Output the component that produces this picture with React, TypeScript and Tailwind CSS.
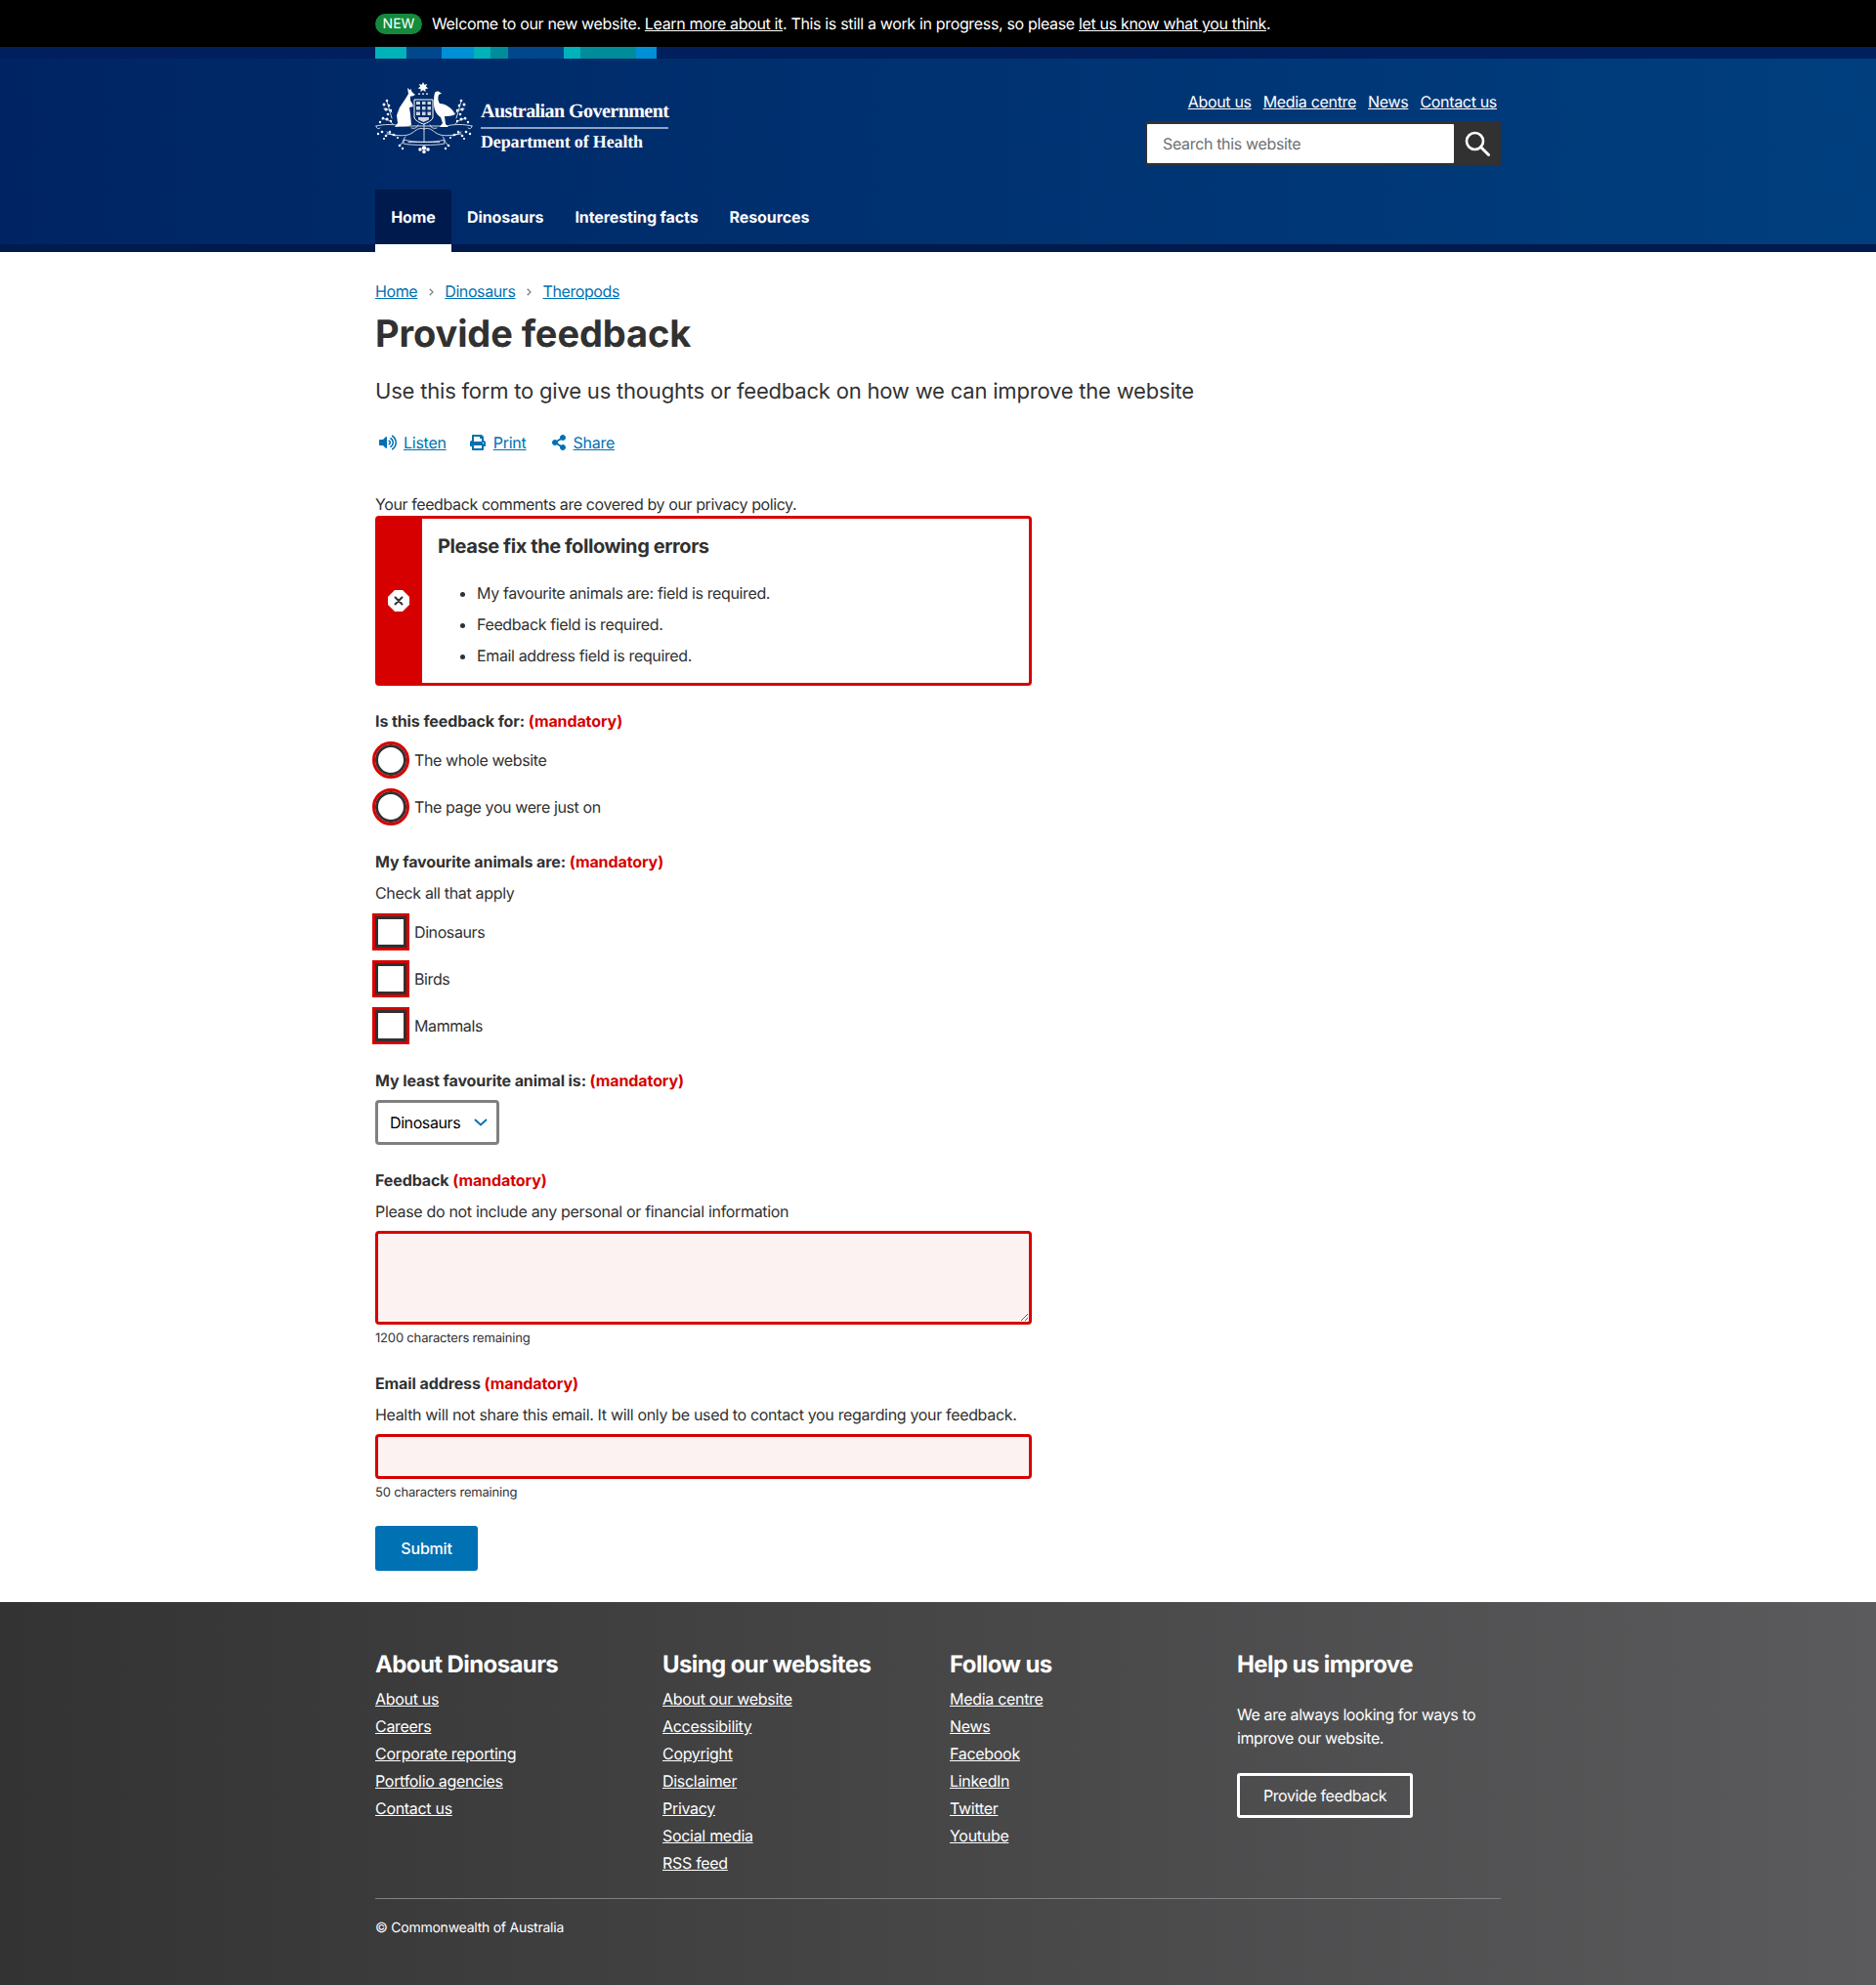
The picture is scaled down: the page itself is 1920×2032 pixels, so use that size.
import React from "react";
import { FaVolumeUp, FaPrint, FaShareAlt } from "react-icons/fa";

const font = "font-['Inter','Liberation_Sans',sans-serif] [text-rendering:geometricPrecision]";
const labelCls = "font-bold text-[16px] leading-[24px] tracking-[-0.1px]";

const Mandatory = () => <span className="text-[#d60000]">(mandatory)</span>;

// wattle blossom dots, mirrored either side of the shield
const blossoms = [
  [12, 19, 1.3], [9, 23, 1.5], [14, 24, 1.3], [11, 28, 1.6], [16, 29, 1.2], [13, 33, 1.3],
  [8, 37, 1.3], [12, 38, 1.500], [16, 40, 1.2], [5, 41, 1.2],
  [3, 53, 1.2], [7, 51, 1.3], [11, 55, 1.300], [15, 51, 1.2], [19, 54, 1.2], [9, 58, 1.1],
  [23, 57, 1.100], [25, 65, 1.300], [28, 68, 1.2],
];

const Crest = () => (
  <svg viewBox="0 0 100 74" className="w-[100px] h-[74px] shrink-0" fill="#fff">
    {/* star */}
    <path d="M49 0l1.300 2.700 2.900-.8-1.300 2.700 2.400 1.800-2.900.6.100 3-2.500-1.800-2.500 1.800.1-3-2.900-.6 2.400-1.800-1.300-2.700 2.900.8z" />
    <path d="M44 11.500h2v1.200h-2zM48 11.500h2v1.200h-2zM52 11.500h2v1.200h-2z" />
    {/* kangaroo */}
    <path d="M33 6l3 2.500.5-2 1 3.500 3.500 3-3 1.500-2 0 0 4.500 2 3 1 3-4 1 1 7 1 11-3 1-14 1 3-4-1-8 3-8 6-9 3-5z" />
    {/* emu */}
    <path d="M61 11c1-2 4-2 5-.5l2 1-3 1.500c-1 3-1 6 1 9 6 0 12 4 16 11-4 2-8 2-11 2l1 8 3 3h-9l3-4-2-6c-5-3-7-9-7-14 0-4 0-8 1-11z" />
    {/* shield */}
    <path d="M40 18h19v18c0 3-6 6-9.500 7-3.500-1-9.500-4-9.500-7z" fill="none" stroke="#fff" strokeWidth="1" />
    <g fillOpacity="0.8">
      <path d="M42 20h4v3h-4zM48 20h3.500v3H48zM53.500 20h3.500v3h-3.500zM42 25h4v3.500h-4zM48 25h3.500v3.500H48zM53.500 25h3.500v3.500h-3.500zM42 30.500h4V34h-4zM48 30.500h3.500V34H48zM53.500 30.500h3.500V34h-3.500zM44 36h11v2.500l-5.500 2.500-5.500-2.500z" />
    </g>
    {/* wattle */}
    <g fill="none" stroke="#fff" strokeWidth="0.8" strokeLinecap="round">
      <path d="M1 45c8-2 18-2 27 0h44c9-2 19-2 27 0" />
      <path d="M1 45c0 2.500 2.500 3.500 4 2M99 45c0 2.500-2.500 3.500-4 2" />
      <path d="M50 43v18M50 48c-5-2-8 1-12 4-6 4-14 3-26 1M50 48c5-2 8 1 12 4 6 4 14 3 26 1" />
      <path d="M44 44c-1 3-4 4-7 3M56 44c1 3 4 4 7 3" />
      <path d="M21 55c-3-1-6-2-9-4M31 56c-3 3-2 6-6 9M79 55c3-1 6-2 9-4M69 56c3 3 2 6 6 9" />
      <path d="M12 20c2 5 3 11 5 17M88 20c-2 5-3 11-5 17M9 27c3 0 6 2 8 4M91 27c-3 0-6 2-8 4M7 38c4-1 8 1 11 5M93 38c-4-1-8 1-11 5" />
      <path d="M30 59c5 3 35 3 40 0l1 4c-7 2-35 2-42 0z" />
      <path d="M34 61.500h32" strokeDasharray="1.500 1" />
    </g>
    <g>
      {blossoms.map(([x, y, r], i) => (
        <g key={i}>
          <circle cx={x} cy={y} r={r} />
          <circle cx={100 - x} cy={y} r={r} />
        </g>
      ))}
      <circle cx="46" cy="69" r="1.800" />
      <circle cx="54" cy="69" r="1.800" />
      <circle cx="50" cy="67.500" r="2.200" />
      <circle cx="50" cy="71.500" r="1.800" />
    </g>
  </svg>
);

const Radio = ({ label }: { label: string }) => (
  <label className="flex items-center h-[36px] text-[16px] text-[#313131]">
    <span className="w-[32px] h-[32px] rounded-full border-[3px] border-[#313131] outline-[3px] outline-[#d60000] bg-white mr-[8px] shrink-0" />
    {label}
  </label>
);

const Check = ({ label }: { label: string }) => (
  <label className="flex items-center h-[36px] text-[16px] text-[#313131]">
    <span className="w-[32px] h-[32px] border-[3px] border-[#313131] outline-[3px] outline-[#d60000] bg-white mr-[8px] shrink-0" />
    {label}
  </label>
);

const Chevron = () => (
  <svg viewBox="0 0 5 8" className="w-[5px] h-[8px] mx-[11.5px] mt-[2px]" fill="none" stroke="#808080" strokeWidth="1.300">
    <path d="M.7.7L4 4 .7 7.300" />
  </svg>
);

const FooterCol = ({ title, links }: { title: string; links: string[] }) => (
  <div className="w-[294px] shrink-0">
    <h3 className="text-[24px] leading-[31px] font-bold tracking-[-0.6px] mb-[6px]">{title}</h3>
    <ul>
      {links.map((l) => (
        <li key={l} className="h-[28px] leading-[28px] text-[16px] tracking-[-0.3px]">
          <a href="#" className="underline">{l}</a>
        </li>
      ))}
    </ul>
  </div>
);

export default function App() {
  return (
    <div className={`${font} bg-white text-[#313131] min-h-[2032px] tracking-[-0.4px]`}>
      {/* announcement */}
      <div className="bg-black h-[48px] text-white">
        <div className="w-[1152px] mx-auto h-full flex items-center text-[16px] tracking-[-0.34px]">
          <span className="bg-[#148a3c] rounded-full text-[14px] leading-[21px] tracking-normal w-[48px] text-center mr-[10px]">NEW</span>
          <span>
            Welcome to our new website. <a href="#" className="underline">Learn more about it</a>. This is still a work in progress, so please <a href="#" className="underline">let us know what you think</a>.
          </span>
        </div>
      </div>

      {/* header */}
      <header className="bg-gradient-to-r from-[#002463] to-[#003f7f] h-[210px] border-b-[8px] border-[#001a4d]">
        <div className="h-[12px] bg-[#001f5c]">
          <div className="w-[1152px] mx-auto h-full flex">
            <div className="w-[32px] bg-[#00b2b9]" />
            <div className="w-[36px] bg-[#00478c]" />
            <div className="w-[33px] bg-[#0090d6]" />
            <div className="w-[17px] bg-[#00b2b9]" />
            <div className="w-[18px] bg-[#008c9a]" />
            <div className="w-[57px] bg-[#00478c]" />
            <div className="w-[17px] bg-[#00b2b9]" />
            <div className="w-[57px] bg-[#008c9a]" />
            <div className="w-[21px] bg-[#0090d6]" />
          </div>
        </div>
        <div className="w-[1152px] mx-auto">
          <div className="flex justify-between h-[134px]">
            <div className="flex items-start pt-[24px]">
              <Crest />
              <div className="ml-[8px] mt-[17px] w-[192px] text-white font-['Liberation_Serif',serif] font-bold">
                <div className="text-[20px] leading-[26px] tracking-[-0.55px] pb-[3px] border-b-[2px] border-[#8fa3c7] whitespace-nowrap">Australian Government</div>
                <div className="text-[18px] leading-[24px] tracking-[-0.15px] mt-[1px] whitespace-nowrap">Department of Health</div>
              </div>
            </div>
            <div className="flex flex-col items-end pt-[32px]">
              <nav className="flex gap-[12px] text-[16px] text-white pr-[4px] leading-[24px] tracking-[-0.32px]">
                <a href="#" className="underline">About us</a>
                <a href="#" className="underline">Media centre</a>
                <a href="#" className="underline">News</a>
                <a href="#" className="underline">Contact us</a>
              </nav>
              <div className="flex w-[364px] h-[46px] mt-[8px] bg-[#313131] rounded-[3px] pl-[2px] py-[3px]">
                <div className="flex-1 bg-white rounded-[1px] flex items-center pl-[16px] text-[16px] tracking-[-0.34px] text-[#6f6f6f]">Search this website</div>
                <div className="w-[48px] flex items-center justify-center">
                  <svg viewBox="0 0 26 26" className="w-[26px] h-[26px]" fill="none" stroke="#fff" strokeWidth="2.600" strokeLinecap="round">
                    <circle cx="10.500" cy="10.500" r="8.500" />
                    <path d="M16.500 16.500l8 8" strokeWidth="3" />
                  </svg>
                </div>
              </div>
            </div>
          </div>
          <nav className="flex text-white font-bold text-[16px] tracking-[-0.1px]">
            <a href="#" className="bg-[#001a4d] h-[64px] w-[78px] text-center leading-[56px] relative">
              Home
              <span className="absolute left-0 right-0 bottom-0 h-[8px] bg-white" />
            </a>
            <a href="#" className="px-[16px] leading-[56px]">Dinosaurs</a>
            <a href="#" className="px-[16px] leading-[56px]">Interesting facts</a>
            <a href="#" className="px-[16px] leading-[56px]">Resources</a>
          </nav>
        </div>
      </header>

      {/* main */}
      <main className="w-[1152px] mx-auto pt-[28px] pb-[32px]">
        <div className="flex items-center text-[16px] leading-[24px] tracking-[-0.4px] text-[#0071b3]">
          <a href="#" className="underline">Home</a>
          <Chevron />
          <a href="#" className="underline">Dinosaurs</a>
          <Chevron />
          <a href="#" className="underline">Theropods</a>
        </div>
        <h1 className="text-[38px] leading-[52px] font-bold tracking-[-0.1px] mt-[6px]">Provide feedback</h1>
        <p className="text-[22px] leading-[36px] tracking-[-0.2px] mt-[15px]">Use this form to give us thoughts or feedback on how we can improve the website</p>
        <div className="flex items-center mt-[22px] text-[16px] leading-[24px] tracking-[-0.25px] text-[#0071b3]">
          <FaVolumeUp className="w-[18px] h-[16px] ml-[4px] mr-[7px]" />
          <a href="#" className="underline mr-[24px]">Listen</a>
          <FaPrint className="w-[16px] h-[16px] mr-[8px]" />
          <a href="#" className="underline mr-[26px]">Print</a>
          <FaShareAlt className="w-[14px] h-[16px] mr-[8px]" />
          <a href="#" className="underline">Share</a>
        </div>

        <form className="w-[672px] mt-[39px]">
          <p className="text-[16px] leading-[24px]">Your feedback comments are covered by our privacy policy.</p>
          <div className="flex border-[3px] border-[#d60000] rounded-[4px] h-[174px]">
            <div className="w-[45px] bg-[#d60000] flex items-center justify-center pr-[3px]">
              <svg viewBox="0 0 22 22" className="w-[22px] h-[22px]">
                <path d="M7 0h8l7 7v8l-7 7H7l-7-7V7z" fill="#fff" />
                <path d="M7.500 7.500l7 7M14.500 7.500l-7 7" stroke="#313131" strokeWidth="2" strokeLinecap="round" />
              </svg>
            </div>
            <div className="pl-[16px] pt-[15px]">
              <h2 className="text-[20px] leading-[26px] font-bold tracking-[-0.42px]">Please fix the following errors</h2>
              <ul className="list-disc pl-[40px] mt-[23px] text-[16px] leading-[24px] tracking-[-0.37px]">
                <li className="mb-[8px]">My favourite animals are: field is required.</li>
                <li className="mb-[8px]">Feedback field is required.</li>
                <li>Email address field is required.</li>
              </ul>
            </div>
          </div>

          <div className={`mt-[24px] ${labelCls}`}>Is this feedback for: <Mandatory /></div>
          <div className="mt-[10px] flex flex-col gap-[12px]">
            <Radio label="The whole website" />
            <Radio label="The page you were just on" />
          </div>

          <div className={`mt-[26px] ${labelCls}`}>My favourite animals are: <Mandatory /></div>
          <p className="mt-[8px] text-[16px] leading-[24px] tracking-[-0.33px]">Check all that apply</p>
          <div className="mt-[10px] flex flex-col gap-[12px]">
            <Check label="Dinosaurs" />
            <Check label="Birds" />
            <Check label="Mammals" />
          </div>

          <div className={`mt-[26px] ${labelCls}`}>My least favourite animal is: <Mandatory /></div>
          <div className="mt-[8px] flex items-center w-[127px] h-[46px] border-[3px] border-[#808080] rounded-[4px] pl-[12px] text-[16px] text-black">
            Dinosaurs
            <svg viewBox="0 0 14 8" className="w-[14px] h-[8px] ml-[14px]" fill="none" stroke="#0071b3" strokeWidth="2">
              <path d="M1 1l6 5.500L13 1" />
            </svg>
          </div>

          <div className={`mt-[24px] ${labelCls}`}>Feedback <Mandatory /></div>
          <p className="mt-[8px] text-[16px] leading-[24px] tracking-[-0.33px]">Please do not include any personal or financial information</p>
          <textarea className="block mt-[8px] w-full h-[96px] border-[3px] border-[#d60000] rounded-[4px] bg-[#fcf2f1]" />
          <p className="mt-[4px] text-[13px] leading-[20px] tracking-[-0.18px]">1200 characters remaining</p>

          <div className={`mt-[24px] ${labelCls}`}>Email address <Mandatory /></div>
          <p className="mt-[8px] text-[16px] leading-[24px] tracking-[-0.33px] whitespace-nowrap">Health will not share this email. It will only be used to contact you regarding your feedback.</p>
          <div className="mt-[8px] w-full h-[46px] border-[3px] border-[#d60000] rounded-[4px] bg-[#fcf2f1]" />
          <p className="mt-[4px] text-[13px] leading-[20px] tracking-[-0.18px]">50 characters remaining</p>

          <button type="button" className="block mt-[24px] w-[105px] h-[46px] bg-[#0071b3] rounded-[3px] text-white text-[16px] font-medium tracking-[-0.2px]">Submit</button>
        </form>
      </main>

      {/* footer */}
      <footer className="bg-gradient-to-r from-[#333333] to-[#5b5b5d] text-white h-[392px] pt-[48px]">
        <div className="w-[1152px] mx-auto">
          <div className="flex h-[256px] border-b border-[#808080]">
            <FooterCol title="About Dinosaurs" links={["About us", "Careers", "Corporate reporting", "Portfolio agencies", "Contact us"]} />
            <FooterCol title="Using our websites" links={["About our website", "Accessibility", "Copyright", "Disclaimer", "Privacy", "Social media", "RSS feed"]} />
            <FooterCol title="Follow us" links={["Media centre", "News", "Facebook", "LinkedIn", "Twitter", "Youtube"]} />
            <div className="flex-1">
              <h3 className="text-[24px] leading-[31px] font-bold tracking-[-0.6px] mb-[24px]">Help us improve</h3>
              <p className="text-[16px] leading-[24px]">We are always looking for ways to improve our website.</p>
              <a href="#" className="mt-[24px] flex items-center justify-center w-[180px] h-[46px] border-[3px] border-white rounded-[3px] text-[16px]">Provide feedback</a>
            </div>
          </div>
          <p className="mt-[20px] text-[14px] leading-[20px] tracking-[-0.24px]">© Commonwealth of Australia</p>
        </div>
      </footer>
    </div>
  );
}
